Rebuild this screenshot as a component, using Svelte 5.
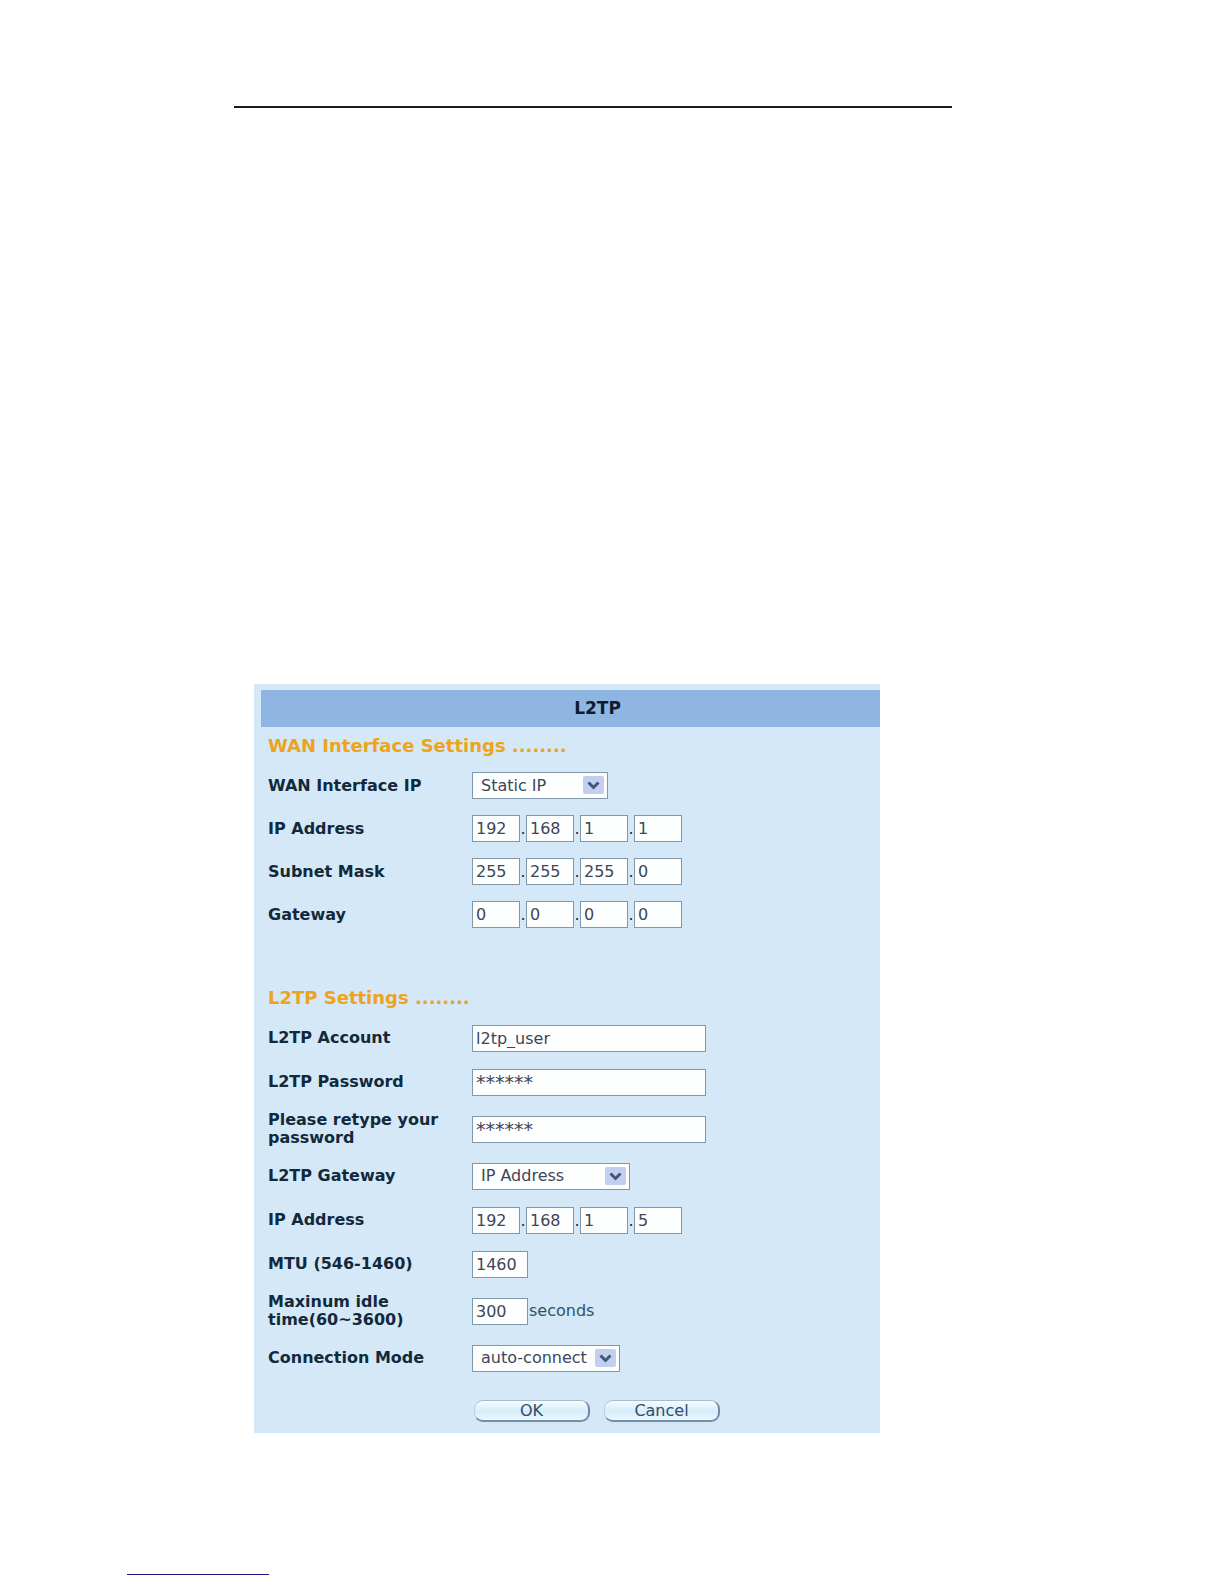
<script>
  let wan = $state({
    mode: 'Static IP',
    ip: ['192', '168', '1', '1'],
    mask: ['255', '255', '255', '0'],
    gateway: ['0', '0', '0', '0']
  });

  let l2tp = $state({
    account: 'l2tp_user',
    password: '******',
    retype: '******',
    gatewayType: 'IP Address',
    ip: ['192', '168', '1', '5'],
    mtu: '1460',
    idle: '300',
    connection: 'auto-connect'
  });
</script>

{#snippet octets(id, name, parts)}
  <div class="octets">
    {#each parts as _, i}
      {#if i > 0}<span class="dot">.</span>{/if}
      <input
        id={i === 0 ? id : undefined}
        class="field octet"
        type="text"
        maxlength="3"
        aria-label="{name} {i + 1}"
        bind:value={parts[i]}
      />
    {/each}
  </div>
{/snippet}

{#snippet arrow()}
  <svg class="arrow" viewBox="0 0 21 18" width="21" height="18" aria-hidden="true">
    <rect width="21" height="18" rx="2" fill="#c3cfee" />
    <path d="M5.5 6.5 L10.5 11.5 L15.5 6.5" fill="none" stroke="#43547f" stroke-width="3" />
  </svg>
{/snippet}

<div class="page">
  <hr class="rule-top" />

  <form class="panel" onsubmit={(e) => e.preventDefault()}>
    <h1 class="title">L2TP</h1>

    <section class="section">
      <h2 class="heading">WAN Interface Settings ........</h2>
      <div class="row">
        <label for="wan-mode">WAN Interface IP</label>
        <div class="select select-sm">
          <select id="wan-mode" class="field" bind:value={wan.mode}>
            <option>Static IP</option>
            <option>Dynamic IP</option>
          </select>
          {@render arrow()}
        </div>
      </div>
      <div class="row">
        <label for="wan-ip">IP Address</label>
        {@render octets('wan-ip', 'IP Address', wan.ip)}
      </div>
      <div class="row">
        <label for="wan-mask">Subnet Mask</label>
        {@render octets('wan-mask', 'Subnet Mask', wan.mask)}
      </div>
      <div class="row">
        <label for="wan-gateway">Gateway</label>
        {@render octets('wan-gateway', 'Gateway', wan.gateway)}
      </div>
    </section>

    <section class="section section-l2tp">
      <h2 class="heading">L2TP Settings ........</h2>
      <div class="row">
        <label for="account">L2TP Account</label>
        <input id="account" class="field wide" type="text" bind:value={l2tp.account} />
      </div>
      <div class="row">
        <label for="password">L2TP Password</label>
        <input id="password" class="field wide masked" type="text" bind:value={l2tp.password} />
      </div>
      <div class="row">
        <label for="retype">Please retype your password</label>
        <input id="retype" class="field wide masked" type="text" bind:value={l2tp.retype} />
      </div>
      <div class="row">
        <label for="gateway-type">L2TP Gateway</label>
        <div class="select select-lg">
          <select id="gateway-type" class="field" bind:value={l2tp.gatewayType}>
            <option>IP Address</option>
            <option>Domain Name</option>
          </select>
          {@render arrow()}
        </div>
      </div>
      <div class="row">
        <label for="l2tp-ip">IP Address</label>
        {@render octets('l2tp-ip', 'L2TP IP Address', l2tp.ip)}
      </div>
      <div class="row">
        <label for="mtu">MTU (546-1460)</label>
        <input id="mtu" class="field short" type="text" bind:value={l2tp.mtu} />
      </div>
      <div class="row">
        <label for="idle">Maxinum idle time(60~3600)</label>
        <div class="with-unit">
          <input id="idle" class="field short" type="text" bind:value={l2tp.idle} />
          <span class="unit">seconds</span>
        </div>
      </div>
      <div class="row">
        <label for="connection">Connection Mode</label>
        <div class="select select-md">
          <select id="connection" class="field" bind:value={l2tp.connection}>
            <option>auto-connect</option>
            <option>manual</option>
          </select>
          {@render arrow()}
        </div>
      </div>
    </section>

    <div class="actions">
      <button class="btn" type="submit">OK</button>
      <button class="btn" type="button">Cancel</button>
    </div>
  </form>

  <hr class="rule-bottom" />
</div>

<style>
  :global(body) {
    background: #fff;
  }

  .page {
    padding: 106px 0 8px;
    font-family: 'DejaVu Sans', Verdana, sans-serif;
    font-size: 16px;
    line-height: 18px;
    color: #12293c;
  }

  .rule-top {
    height: 2px;
    margin: 0 272px 0 234px;
    border: 0;
    background: #1c1c1f;
  }

  .rule-bottom {
    width: 142px;
    height: 1px;
    margin: 141px 0 0 127px;
    border: 0;
    background: #1a1780;
  }

  .panel {
    margin: 576px 344px 0 254px;
    padding-top: 6px;
    background: #d4e8f7;
  }

  .title {
    margin: 0 0 1px 7px;
    padding-left: 54px;
    background: #8fb5e2;
    color: #101c2c;
    font-size: 17px;
    line-height: 37px;
    text-align: center;
  }

  .section {
    --row: 43px;
    padding-left: 14px;
  }

  .section-l2tp {
    --row: 44px;
    margin-top: 44px;
  }

  .heading {
    margin: 0;
    color: #eda41c;
    font-size: 18px;
    line-height: 36px;
  }

  .row {
    display: grid;
    grid-template-columns: 204px 1fr;
    align-items: center;
    justify-items: start;
    min-height: var(--row);
  }

  .row label {
    padding: 7px 8px 7px 0;
    font-weight: bold;
  }

  .field {
    box-sizing: border-box;
    height: 27px;
    margin: 0;
    padding: 0 3px;
    border: 1px solid #8097ac;
    border-radius: 0;
    outline: none;
    background: #fdfefe;
    color: #3d4658;
    font: inherit;
  }

  .octets {
    display: flex;
    align-items: baseline;
  }

  .octet {
    width: 48px;
  }

  .dot {
    width: 6px;
    text-align: center;
  }

  .wide {
    width: 234px;
  }

  .short {
    width: 56px;
  }

  .masked {
    font-size: 19px;
  }

  .with-unit {
    display: flex;
    align-items: center;
  }

  .unit {
    padding-left: 1px;
    color: #2c5468;
  }

  .select {
    position: relative;
  }

  .select select {
    width: 100%;
    padding: 0 28px 0 8px;
    appearance: none;
  }

  .select-sm {
    width: 136px;
  }

  .select-md {
    width: 148px;
  }

  .select-lg {
    width: 158px;
  }

  .arrow {
    position: absolute;
    top: 4px;
    right: 4px;
    pointer-events: none;
  }

  .actions {
    display: flex;
    gap: 14px;
    padding: 20px 0 11px 220px;
  }

  .btn {
    width: 116px;
    height: 22px;
    padding: 0;
    border: 1px solid #a5bccd;
    border-right: 2px solid #6c8ba4;
    border-bottom: 2px solid #7090a8;
    border-left-color: #bccfdd;
    border-radius: 9px;
    background: linear-gradient(#f6fbff, #d6ecfa 55%, #eef8ff);
    color: #2f4f66;
    font: inherit;
    line-height: 18px;
  }
</style>
